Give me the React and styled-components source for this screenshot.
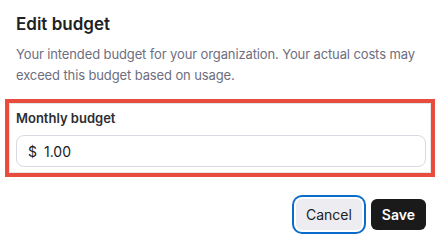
import React from "react";
import styled, { createGlobalStyle } from "styled-components";

const Global = createGlobalStyle`
  html, body { margin: 0; padding: 0; background: #fff; }
  body { font-family: Inter, "Noto Sans", sans-serif; -webkit-font-smoothing: antialiased; }
`;

const Dialog = styled.div`
  width: 442px;
  height: 243px;
  box-sizing: border-box;
  padding: 12px 16px 0 16px;
  display: flex;
  flex-direction: column;
`;

const Title = styled.h2`
  margin: 0;
  font-size: 17px;
  line-height: 24px;
  font-weight: 600;
  color: #202123;
`;

const Description = styled.p`
  margin: 8px 0 0 0;
  font-size: 13px;
  line-height: 21px;
  color: #6e6e80;
  letter-spacing: -0.12px;
`;

const Field = styled.div`
  margin: 13px -9px 0 -11px;
  border: 4px solid #e84c3d;
  box-shadow: inset 0 0 0 1px #e6e6e6;
  padding: 2px 5px 6px 7px;
  display: flex;
  flex-direction: column;
`;

const Label = styled.label`
  font-size: 13px;
  line-height: 20px;
  font-weight: 600;
  color: #2d2d33;
  margin-top: 3px;
`;

const InputBox = styled.div`
  margin-top: 7px;
  height: 32px;
  box-sizing: border-box;
  border: 1px solid #d9d9e3;
  border-radius: 8px;
  display: flex;
  align-items: center;
  padding: 0 11px;
  gap: 7px;
  font-size: 14px;
  color: #202123;
`;

const Prefix = styled.span`
  color: #202123;
`;

const Input = styled.input`
  border: none;
  outline: none;
  padding: 0;
  flex: 1;
  font: inherit;
  color: inherit;
  background: transparent;
`;

const Actions = styled.div`
  margin-top: 22px;
  display: flex;
  justify-content: flex-end;
  gap: 9px;
`;

const Button = styled.button`
  height: 31px;
  box-sizing: border-box;
  border: none;
  border-radius: 6px;
  padding: 0 ${(p) => (p.$primary ? "11px" : "10px")};
  font-family: inherit;
  font-size: 14px;
  font-weight: ${(p) => (p.$primary ? 600 : 400)};
  background: ${(p) => (p.$primary ? "#1a1a1a" : "#ececf1")};
  color: ${(p) => (p.$primary ? "#fff" : "#202123")};
  box-shadow: ${(p) =>
    p.$focused ? "0 0 0 2px #fff, 0 0 0 4px #0b6bcb" : "none"};
  cursor: pointer;
`;

export default function App() {
  return (
    <>
      <Global />
      <Dialog>
        <Title>Edit budget</Title>
        <Description>
          Your intended budget for your organization. Your actual costs may
          exceed this budget based on usage.
        </Description>
        <Field>
          <Label htmlFor="budget">Monthly budget</Label>
          <InputBox>
            <Prefix>$</Prefix>
            <Input id="budget" defaultValue="1.00" />
          </InputBox>
        </Field>
        <Actions>
          <Button $focused>Cancel</Button>
          <Button $primary>Save</Button>
        </Actions>
      </Dialog>
    </>
  );
}
